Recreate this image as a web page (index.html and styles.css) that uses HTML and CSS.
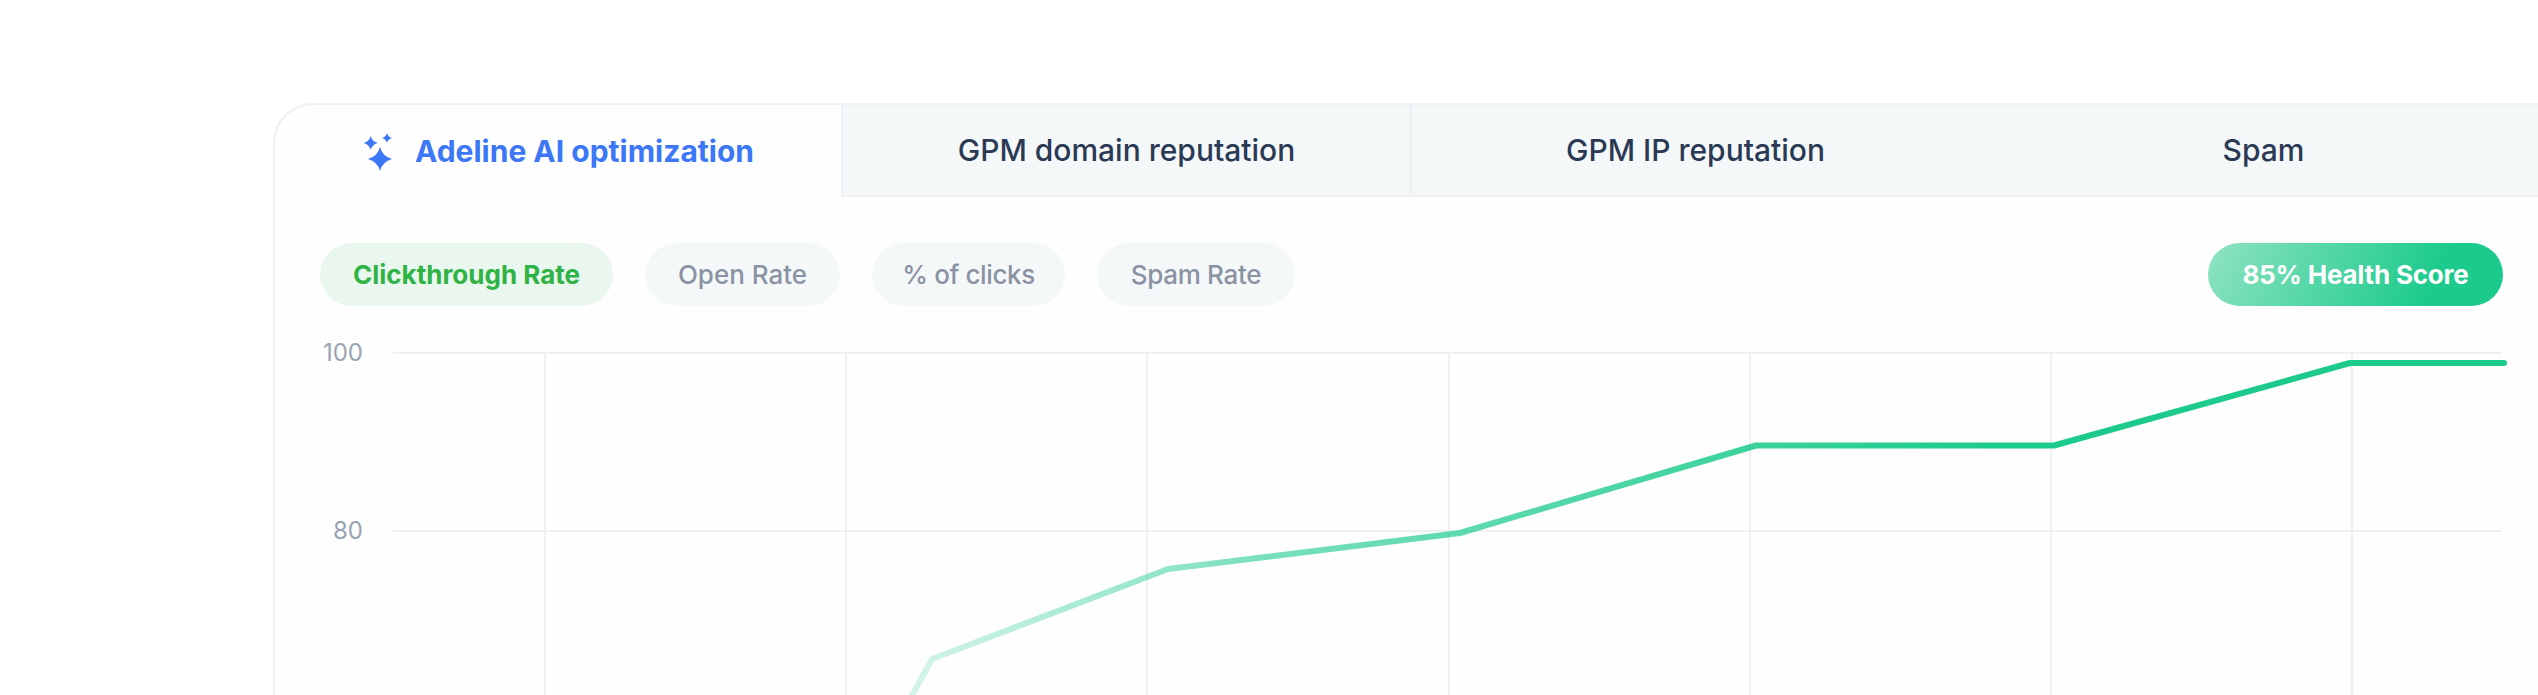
FILE: index.html
```html
<!DOCTYPE html>
<html lang="en">
<head>
  <meta charset="UTF-8" />
  <title>Deliverability</title>
  <link rel="stylesheet" href="styles.css">
</head>
<body>
  <div class="card">
    <div class="tabs">
      <div class="tab active">
        <svg class="sparkle" width="37" height="44" viewBox="0 0 37 44">
          <path d="M24 18 Q26.5 27.5 36 30 Q26.5 32.5 24 42 Q21.5 32.5 12 30 Q21.5 27.5 24 18 Z" />
          <path d="M14.7 7 Q16.2 12.5 21.7 14 Q16.2 15.5 14.7 21 Q13.2 15.5 7.7 14 Q13.2 12.5 14.7 7 Z" />
          <path d="M31 4 Q32 8 36 9 Q32 10 31 14 Q30 10 26 9 Q30 8 31 4 Z" />
        </svg>
        Adeline AI optimization
      </div>
      <div class="tab">GPM domain reputation</div>
      <div class="tab">GPM IP reputation</div>
      <div class="tab last">Spam</div>
    </div>

    <div class="toolbar">
      <div class="pills">
        <span class="pill selected">Clickthrough Rate</span>
        <span class="pill open">Open Rate</span>
        <span class="pill clicks">% of clicks</span>
        <span class="pill spam">Spam Rate</span>
      </div>
      <span class="score">85% Health Score</span>
    </div>

    <svg class="chart" width="2276" height="365" viewBox="273 330 2276 365">
      <defs>
        <linearGradient id="fade" gradientUnits="userSpaceOnUse" x1="880" y1="0" x2="2000" y2="0">
          <stop offset="0" stop-color="#1ccb8c" stop-opacity="0.15" />
          <stop offset="0.35" stop-color="#1ccb8c" stop-opacity="0.6" />
          <stop offset="1" stop-color="#1ccb8c" />
        </linearGradient>
      </defs>
      <g class="grid">
        <line x1="393" y1="353" x2="2502" y2="353" />
        <line x1="393" y1="531" x2="2502" y2="531" />
        <line x1="545" y1="353" x2="545" y2="695" />
        <line x1="846" y1="353" x2="846" y2="695" />
        <line x1="1147" y1="353" x2="1147" y2="695" />
        <line x1="1449" y1="353" x2="1449" y2="695" />
        <line x1="1750" y1="353" x2="1750" y2="695" />
        <line x1="2051" y1="353" x2="2051" y2="695" />
        <line x1="2352" y1="353" x2="2352" y2="695" />
      </g>
      <text class="axis" x="363" y="361">100</text>
      <text class="axis" x="363" y="539">80</text>
      <path class="trend" stroke="url(#fade)" d="M910 699 L932 659 L1168 569 L1460 533 L1756 445.5 L2054 445.5 L2350 363 L2504 363" />
    </svg>
  </div>
</body>
</html>
```

FILE: styles.css
```css
html, body {
  height: 100%;
}
body {
  margin: 0;
  padding: 103px 0 0 273px;
  box-sizing: border-box;
  background: #fff;
  overflow: hidden;
  font-family: Inter, 'Noto Sans', sans-serif;
}
.card {
  width: 2276px;
  height: 640px;
  box-sizing: border-box;
  background: #fefefe;
  border: 2px solid #eef0f4;
  border-radius: 40px 0 0 0;
  overflow: hidden;
}
.tabs {
  display: grid;
  grid-template-columns: 566px repeat(3, 569px);
  height: 92px;
}
.tab {
  display: flex;
  align-items: center;
  justify-content: center;
  gap: 22px;
  background: #f5f8f9;
  border-left: 2px solid #eef0f4;
  border-bottom: 2px solid #eef0f4;
  font-size: 30px;
  font-weight: 500;
  color: #2a3a55;
}
.tab.active {
  padding-right: 6px;
  background: transparent;
  border: none;
  color: #3b77f6;
  font-weight: 700;
}
.tab.last {
  border-left: none;
}
.sparkle {
  fill: #3b77f6;
}
.toolbar {
  display: flex;
  justify-content: space-between;
  align-items: center;
  padding: 46px 44px 0 45px;
}
.pills {
  display: flex;
  gap: 32px;
}
.pill {
  display: block;
  height: 63px;
  line-height: 63px;
  text-align: center;
  border-radius: 32px;
  background: #f5f8f9;
  color: #8a93a3;
  font-size: 26px;
  font-weight: 500;
}
.pill.selected {
  width: 293px;
  background: #e9f7ee;
  color: #2fb344;
  font-weight: 700;
}
.pill.open {
  width: 195px;
}
.pill.clicks {
  width: 193px;
  letter-spacing: -0.4px;
}
.pill.spam {
  width: 198px;
  letter-spacing: -0.3px;
}
.score {
  display: block;
  width: 295px;
  height: 63px;
  line-height: 63px;
  text-align: center;
  border-radius: 32px;
  background: linear-gradient(115deg, #8fe3c2, #1ccb8c 75%);
  color: #fff;
  font-size: 26px;
  font-weight: 700;
  letter-spacing: -0.2px;
}
.chart {
  display: block;
  margin: 24px 0 0 -2px;
}
.grid line {
  stroke: #eef0f4;
  stroke-width: 2;
}
.axis {
  fill: #9aa3b2;
  font-size: 24px;
  text-anchor: end;
}
.trend {
  fill: none;
  stroke-width: 6;
  stroke-linecap: round;
  stroke-linejoin: round;
}
```
